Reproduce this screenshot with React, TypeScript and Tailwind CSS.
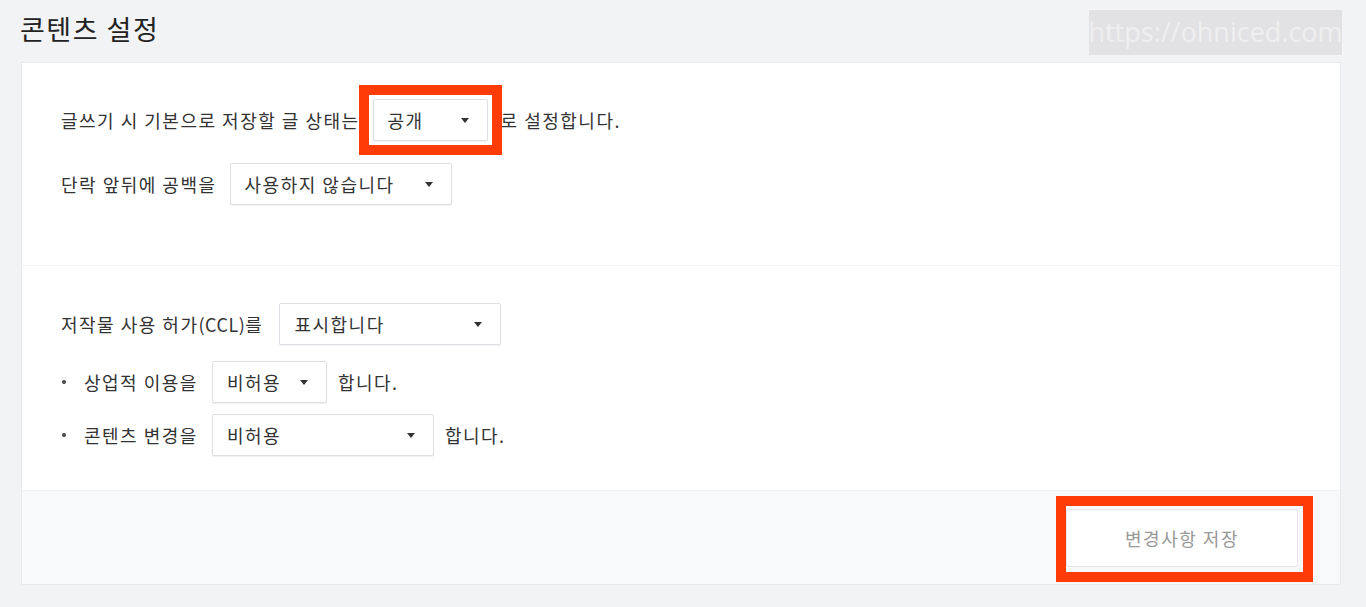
import type { ReactNode } from "react";

const font = "font-['Noto_Sans_CJK_KR','Noto_Sans',sans-serif]";

function Select({ value, width, highlight }: { value: string; width: string; highlight?: boolean }) {
  return (
    <div className={`relative ${width}`}>
      <div className="flex h-[42px] items-center justify-between rounded-[2px] border border-[#dcdfe4] bg-white pl-[14px] pr-[18px] text-[18px] text-[#333] shadow-[0_1px_1px_rgba(0,0,0,0.06)]">
        <span>{value}</span>
        <svg width="8" height="5" viewBox="0 0 8 5" className="shrink-0">
          <path d="M0 0h8L4 5z" fill="#333" />
        </svg>
      </div>
      {highlight && (
        <span className="pointer-events-none absolute -top-[14px] -bottom-[14px] -left-[14px] -right-[14px] border-[10px] border-[#ff3c08]" />
      )}
    </div>
  );
}

function Row({ children, bullet }: { children: ReactNode; bullet?: boolean }) {
  return (
    <div className="flex items-center text-[18px] text-[#333]">
      {bullet && <span className="mr-[18px] ml-[1px] h-[4px] w-[4px] rounded-full bg-[#444]" />}
      {children}
    </div>
  );
}

export default function App() {
  return (
    <div className={`min-h-screen bg-[#f2f3f5] pl-[20px] pr-[24px] pt-[8px] tracking-[1.5px] ${font}`}>
      <div className="flex items-start justify-between">
        <h1 className="pt-[4px] text-[27px] leading-[34px] text-[#222]">콘텐츠 설정</h1>
        <div className="mt-[2px] flex h-[45px] w-[253px] items-center justify-center bg-[#e2e2e4] font-['Open_Sans',sans-serif] text-[27px] tracking-normal text-[#efefef]">
          https://ohniced.com
        </div>
      </div>

      <div className="ml-[1px] mt-[7px] w-[1320px] border border-[#e7e9ed] bg-white">
        <div className="flex flex-col gap-[22px] border-b border-[#f3f4f6] px-[39px] pb-[60px] pt-[36px]">
          <Row>
            <span>글쓰기 시 기본으로 저장할 글 상태는</span>
            <div className="ml-[13px] mr-[13px]">
              <Select value="공개" width="w-[115px]" highlight />
            </div>
            <span>로 설정합니다.</span>
          </Row>
          <Row>
            <span>단락 앞뒤에 공백을</span>
            <div className="ml-[13px]">
              <Select value="사용하지 않습니다" width="w-[222px]" />
            </div>
          </Row>
        </div>

        <div className="flex flex-col px-[39px] pb-[34px] pt-[37px]">
          <Row>
            <span>
              저작물 사용 허가<span className="tracking-[0.5px]">(CCL)</span>를
            </span>
            <div className="ml-[16px]">
              <Select value="표시합니다" width="w-[222px]" />
            </div>
          </Row>
          <div className="mt-[16px]">
            <Row bullet>
              <span>상업적 이용을</span>
              <div className="ml-[14px] mr-[11px]">
                <Select value="비허용" width="w-[115px]" />
              </div>
              <span>합니다.</span>
            </Row>
          </div>
          <div className="mt-[11px]">
            <Row bullet>
              <span>콘텐츠 변경을</span>
              <div className="ml-[14px] mr-[11px]">
                <Select value="비허용" width="w-[222px]" />
              </div>
              <span>합니다.</span>
            </Row>
          </div>
        </div>

        <div className="flex justify-end border-t border-[#f0f1f3] bg-[#f8f9fa] pb-[17px] pr-[42px] pt-[18px]">
          <div className="relative">
            <button className="h-[58px] w-[232px] rounded-[2px] border border-[#e3e5e9] bg-white text-[18px] tracking-[1.5px] text-[#999]">
              변경사항 저장
            </button>
            <span className="pointer-events-none absolute -top-[13px] -bottom-[15px] -left-[10px] -right-[15px] border-[10px] border-[#ff3c08]" />
          </div>
        </div>
      </div>
    </div>
  );
}
